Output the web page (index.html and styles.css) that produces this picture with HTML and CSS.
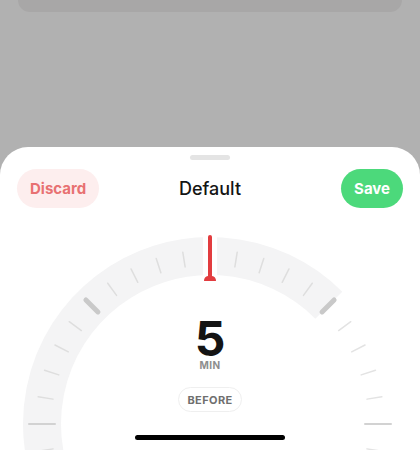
FILE: index.html
```html
<!DOCTYPE html>
<html lang="en">
<head>
    <meta charset="UTF-8">
    <meta name="viewport" content="width=device-width, initial-scale=1.0">
    <title>Reminder</title>

    <link rel="stylesheet" href="styles.css">
</head>
<body>

    <!-- карточка за шторкой -->
    <div class="Behind"></div>

    <section class="Sheet">
        <div class="Sheet__handle"></div>

        <header class="Sheet__head">
            <button class="Btn Btn--discard">Discard</button>
            <h3 class="Sheet__title">Default</h3>
            <button class="Btn Btn--save">Save</button>
        </header>

        <div class="Dial">
            <svg class="Dial__svg" width="420" height="242" viewBox="0 0 420 242">
                <defs>
                    <line id="tick" x1="210" y1="42" x2="210" y2="57" />
                    <line id="tickMajor" x1="210" y1="35" x2="210" y2="61" />
                    <line id="tickThick" x1="210" y1="40.5" x2="210" y2="57.5" />
                </defs>

                <!-- полоса -->
                <path class="Dial__band" d="M64.51 300 A168 168 0 0 1 328.79 97.21" />

                <!-- мелкие деления -->
                <g class="Dial__ticks">
                    <use href="#tick" transform="rotate(-117 210 216)" />
                    <use href="#tick" transform="rotate(-108 210 216)" />
                    <use href="#tick" transform="rotate(-99 210 216)" />
                    <use href="#tick" transform="rotate(-81 210 216)" />
                    <use href="#tick" transform="rotate(-72 210 216)" />
                    <use href="#tick" transform="rotate(-63 210 216)" />
                    <use href="#tick" transform="rotate(-54 210 216)" />
                    <use href="#tick" transform="rotate(-36 210 216)" />
                    <use href="#tick" transform="rotate(-27 210 216)" />
                    <use href="#tick" transform="rotate(-18 210 216)" />
                    <use href="#tick" transform="rotate(-9 210 216)" />
                    <use href="#tick" transform="rotate(9 210 216)" />
                    <use href="#tick" transform="rotate(18 210 216)" />
                    <use href="#tick" transform="rotate(27 210 216)" />
                    <use href="#tick" transform="rotate(36 210 216)" />
                </g>
                <g class="Dial__ticks Dial__ticks--off">
                    <use href="#tick" transform="rotate(54 210 216)" />
                    <use href="#tick" transform="rotate(63 210 216)" />
                    <use href="#tick" transform="rotate(72 210 216)" />
                    <use href="#tick" transform="rotate(81 210 216)" />
                    <use href="#tick" transform="rotate(99 210 216)" />
                    <use href="#tick" transform="rotate(108 210 216)" />
                    <use href="#tick" transform="rotate(117 210 216)" />
                </g>
                <g class="Dial__ticks Dial__ticks--major">
                    <use href="#tickMajor" transform="rotate(-90 210 216)" />
                    <use href="#tickMajor" transform="rotate(90 210 216)" />
                </g>
                <g class="Dial__ticks Dial__ticks--thick">
                    <use href="#tickThick" transform="rotate(-45 210 216)" />
                    <use href="#tickThick" transform="rotate(45 210 216)" />
                </g>

                <!-- стрелка -->
                <rect class="Dial__gap" x="203" y="26" width="14" height="44" />
                <rect class="Dial__needle" x="208" y="27" width="4" height="46" rx="2" />
                <path class="Dial__needle" d="M204 73 C204 70 205.5 68.5 208 68 L212 68 C214.5 68.5 216 70 216 73 Z" />
            </svg>

            <div class="Dial__value">
                <span class="Dial__num">5</span>
                <span class="Dial__unit">MIN</span>
                <span class="Dial__pill">BEFORE</span>
            </div>
        </div>
    </section>

    <div class="HomeBar"></div>
</body>
</html>
```

FILE: styles.css
```css
* {
    box-sizing: border-box;
}

body {
    margin: 0;
    height: 450px;
    overflow: hidden;
    background: #b1b1b1;
    font-family: 'Inter', 'Liberation Sans', sans-serif;
}

.Behind {
    height: 12px;
    margin: 0 18px;
    background: #a8a7a7;
    border-radius: 0 0 12px 12px;
}

.Sheet {
    margin-top: 135px;
    height: 303px;
    background: #fff;
    border-radius: 28px 28px 0 0;
    padding-top: 8px;
}

.Sheet__handle {
    width: 40px;
    height: 5px;
    margin: 0 auto;
    background: #e4e4e4;
    border-radius: 3px;
}

.Sheet__head {
    display: grid;
    grid-template-columns: 1fr auto 1fr;
    align-items: center;
    padding: 0 17px;
    margin-top: 9px;
}

.Sheet__title {
    margin: 0;
    font-size: 18px;
    font-weight: 500;
    color: #141414;
}

.Btn {
    height: 39px;
    padding: 0 13px;
    border: none;
    border-radius: 20px;
    font-family: inherit;
    font-size: 15px;
    font-weight: 700;
}

.Btn--discard {
    justify-self: start;
    background: #fdeeee;
    color: #e87172;
}

.Btn--save {
    justify-self: end;
    background: #4cd97b;
    color: #fff;
}

.Dial {
    display: grid;
}

.Dial__svg,
.Dial__value {
    grid-area: 1 / 1;
}

.Dial__band {
    fill: none;
    stroke: #f4f4f5;
    stroke-width: 38;
}

.Dial__ticks {
    stroke: #dedede;
    stroke-width: 1.5;
    stroke-linecap: round;
}

.Dial__ticks--off {
    stroke: #e3e3e3;
}

.Dial__ticks--major {
    stroke: #d2d2d2;
    stroke-width: 2;
}

.Dial__ticks--thick {
    stroke: #c9c9c9;
    stroke-width: 5;
}

.Dial__gap {
    fill: #fff;
}

.Dial__needle {
    fill: #e23c3f;
}

.Dial__value {
    display: flex;
    flex-direction: column;
    align-items: center;
    padding-top: 111px;
}

.Dial__num {
    font-size: 48px;
    line-height: 40px;
    font-weight: 700;
    color: #141414;
}

.Dial__unit {
    margin-top: 1px;
    font-size: 10px;
    line-height: 10px;
    font-weight: 700;
    letter-spacing: 0.5px;
    color: #8d8d8d;
}

.Dial__pill {
    margin-top: 17px;
    height: 25px;
    padding: 0 8px;
    display: flex;
    align-items: center;
    border: 1.5px solid #efefef;
    border-radius: 13px;
    font-size: 11px;
    font-weight: 700;
    letter-spacing: 0.4px;
    color: #6f6f6f;
}

.HomeBar {
    position: fixed;
    left: 135px;
    bottom: 10px;
    width: 150px;
    height: 5px;
    background: #000;
    border-radius: 3px;
}
```
